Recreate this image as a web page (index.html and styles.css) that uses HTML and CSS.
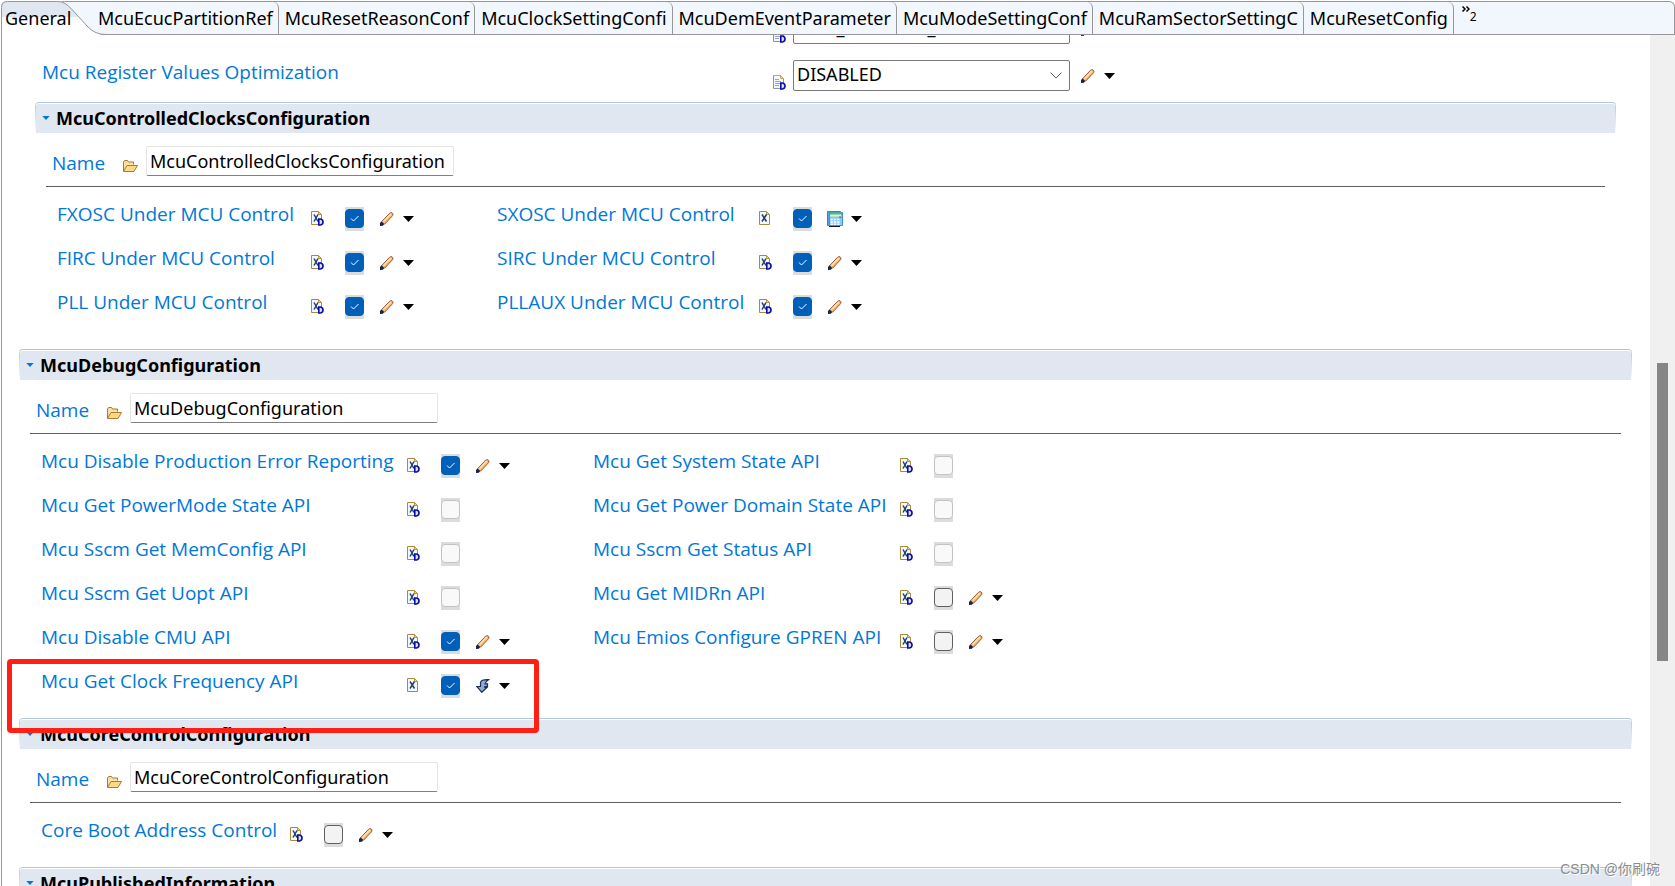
FILE: index.html
```html
<!DOCTYPE html>
<html lang="en">
<head>
<meta charset="utf-8">
<title>Mcu configuration</title>
<link rel="stylesheet" href="styles.css">
</head>
<body>
<svg class="sprites" aria-hidden="true">
  <symbol id="xml" viewBox="0 0 13 15">
    <path d="M.5 .5h7l3 3v10h-10z" fill="#f3f8fe" stroke="#a88a3c"/>
    <path d="M7.500.5v3h3z" fill="#ecd48c" stroke="#b8963f"/>
    <path d="M3 3.500l4.500 7M7.500 3.500l-4.500 7" stroke="#1f3f66" stroke-width="1.500" fill="none"/>
  </symbol>
  <symbol id="xmld" viewBox="0 0 13 15">
    <path d="M.5 .5h7l3 3v10h-10z" fill="#f3f8fe" stroke="#a88a3c"/>
    <path d="M7.500.5v3h3z" fill="#ecd48c" stroke="#b8963f"/>
    <path d="M3 3.500l4 7M7 3.500l-4 7" stroke="#1f3f66" stroke-width="1.500" fill="none"/>
    <path d="M7.800 8v6h1.700q2.500-.4 2.500-3t-2.500-3z" fill="#dbe3f5" stroke="#0b0ba8" stroke-width="1.600"/>
  </symbol>
  <symbol id="docd" viewBox="0 0 13 15">
    <path d="M.5 .5h7l3 3v10h-10z" fill="#f3f8fe" stroke="#8a93a8"/>
    <path d="M.5.5h7l3 3" fill="none" stroke="#c4ab68"/>
    <path d="M7.500.5v3h3z" fill="#ecd48c" stroke="#c4ab68"/>
    <path d="M2 4.500h4M2 6.500h6M2 8.500h5M2 10.500h4" stroke="#8da5cf"/>
    <path d="M7.800 8v6h1.700q2.500-.4 2.500-3t-2.500-3z" fill="#dbe3f5" stroke="#0b0ba8" stroke-width="1.600"/>
  </symbol>
  <symbol id="pencil" viewBox="0 0 14 14">
    <path d="M1.500 9.800L9.500 1.300q1.200-1 2.500-.5 1.300.8.8 2.600L4.800 12l-3 .8z" fill="#f5b877" stroke="#9a5a2c"/>
    <path d="M3.500 9.500l7.500-7.500" stroke="#ffe2b8" stroke-width="1.500"/>
    <path d="M0 14v-3l1.500-1.500L4 11.700 3 13.700z" fill="#14225c"/>
  </symbol>
  <symbol id="calc" viewBox="0 0 16 16">
    <path d="M2 14h11v2H2z" fill="#10233c"/>
    <path d="M.5.5h13v14H.5z" fill="#4fa3e6" stroke="#2f86d0"/>
    <path d="M2.500 1.500h13v13h-13z" fill="#8cc8f5" stroke="#3d93da"/>
    <path d="M3 1.500h12v2.500H3z" fill="#57bb6a"/>
    <path d="M3 3.500h11v2H3z" fill="#d8f2d4"/>
    <path d="M3.500 8.500h9M3.500 11h9M3.500 13.300h9" stroke="#fff" stroke-width="1.600" stroke-dasharray="2.400 .9"/>
    <path d="M12 5.500h2.500v1.500H12z" fill="#d0564c"/>
  </symbol>
  <symbol id="arrow" viewBox="0 0 14 14">
    <path d="M12.500.7Q5.500.3 4.500 3.500v4H.8l5 5.800L10.800 8.500H8.800V7.500h2.700V4.800H9Q9.500 2.500 12.500.7z" fill="#8eacd4" stroke="#1b3053" stroke-width="1.200"/>
  </symbol>
  <symbol id="folder" viewBox="0 0 15 12">
    <path d="M.5 11V2l1-1.500h3l1 1.500h5v2.500" fill="#f7e2a6" stroke="#a8782c"/>
    <path d="M.5 11.500L4 5.500h10.500L11 11.500z" fill="#fbd98a" stroke="#b07a28"/>
  </symbol>
  <symbol id="caret" viewBox="0 0 11 6"><path d="M0 0h11L5.500 6z"/></symbol>
  <symbol id="check" viewBox="0 0 19 19"><path d="M6 9.500l2.500 2.500 5-5" fill="none" stroke="#fff"/></symbol>
  <symbol id="chevron" viewBox="0 0 12 7"><path d="M.5.5L6 6 11.500.5" fill="none" stroke="#606060"/></symbol>
</svg>

<div class="editor">
  <nav class="tabs" role="tablist">
    <button class="tab tab-active" role="tab" aria-selected="true">
      <svg class="tab-shape" viewBox="0 0 106 34" aria-hidden="true">
        <path d="M1 34V6Q1 0 7 0H58Q65 0 72 8L88 26Q95 34 106 34z" fill="#fff"/>
        <path d="M1 16V6Q1 0 7 0H58Q65 0 72 8L79 16z" fill="#e0e7f1"/>
        <path d="M1.500 34V6.500Q1.500.5 7.500.5H58Q65 .5 72 8.500L88 26Q95 33.500 106 33.500" fill="none" stroke="#979797"/>
      </svg>
      <span>General</span>
    </button>
    <button class="tab" role="tab">McuEcucPartitionRef</button>
    <button class="tab" role="tab">McuResetReasonConf</button>
    <button class="tab" role="tab">McuClockSettingConfi</button>
    <button class="tab" role="tab">McuDemEventParameter</button>
    <button class="tab" role="tab">McuModeSettingConf</button>
    <button class="tab" role="tab">McuRamSectorSettingC</button>
    <button class="tab" role="tab">McuResetConfig</button>
    <button class="more" aria-label="2 more tabs">
      <svg width="8" height="6" viewBox="0 0 8 6" aria-hidden="true"><path d="M.5.500L3 3 .5 5.500M4.500.500L7 3 4.500 5.500" fill="none" stroke="#000" stroke-width="1.500"/></svg>
      <span>2</span>
    </button>
  </nav>

  <div class="pane">
    <main class="form">
      <div class="choice">
        <span></span>
        <svg class="doc"><use href="#docd"/></svg>
        <span class="combo"><select aria-label="Mcu Timeout Method"><option>OSIF_COUNTER_DUMMY</option></select><svg><use href="#chevron"/></svg></span>
        <button class="action" aria-label="Edit timeout method"><svg class="pencil"><use href="#pencil"/></svg><svg class="caret"><use href="#caret"/></svg></button>
      </div>
      <div class="choice">
        <label for="optimization">Mcu Register Values Optimization</label>
        <svg class="doc"><use href="#docd"/></svg>
        <span class="combo"><select id="optimization"><option>DISABLED</option></select><svg><use href="#chevron"/></svg></span>
        <button class="action" aria-label="Edit optimization"><svg class="pencil"><use href="#pencil"/></svg><svg class="caret"><use href="#caret"/></svg></button>
      </div>

      <section class="section section-nested">
        <h2><svg><use href="#caret"/></svg>McuControlledClocksConfiguration</h2>
        <div class="name"><label for="n1">Name</label><svg><use href="#folder"/></svg><input id="n1" type="text" value="McuControlledClocksConfiguration"></div>
        <div class="rows rows-clocks">
          <label for="c1">FXOSC Under MCU Control</label>
          <div class="controls"><svg class="doc"><use href="#xmld"/></svg><span class="box"><input id="c1" type="checkbox" checked><svg><use href="#check"/></svg></span><button class="action" aria-label="Edit FXOSC"><svg class="pencil"><use href="#pencil"/></svg><svg class="caret"><use href="#caret"/></svg></button></div>
          <label for="c2">SXOSC Under MCU Control</label>
          <div class="controls"><svg class="doc"><use href="#xml"/></svg><span class="box"><input id="c2" type="checkbox" checked><svg><use href="#check"/></svg></span><button class="action" aria-label="Calculate SXOSC"><svg class="calc"><use href="#calc"/></svg><svg class="caret"><use href="#caret"/></svg></button></div>
          <label for="c3">FIRC Under MCU Control</label>
          <div class="controls"><svg class="doc"><use href="#xmld"/></svg><span class="box"><input id="c3" type="checkbox" checked><svg><use href="#check"/></svg></span><button class="action" aria-label="Edit FIRC"><svg class="pencil"><use href="#pencil"/></svg><svg class="caret"><use href="#caret"/></svg></button></div>
          <label for="c4">SIRC Under MCU Control</label>
          <div class="controls"><svg class="doc"><use href="#xmld"/></svg><span class="box"><input id="c4" type="checkbox" checked><svg><use href="#check"/></svg></span><button class="action" aria-label="Edit SIRC"><svg class="pencil"><use href="#pencil"/></svg><svg class="caret"><use href="#caret"/></svg></button></div>
          <label for="c5">PLL Under MCU Control</label>
          <div class="controls"><svg class="doc"><use href="#xmld"/></svg><span class="box"><input id="c5" type="checkbox" checked><svg><use href="#check"/></svg></span><button class="action" aria-label="Edit PLL"><svg class="pencil"><use href="#pencil"/></svg><svg class="caret"><use href="#caret"/></svg></button></div>
          <label for="c6">PLLAUX Under MCU Control</label>
          <div class="controls"><svg class="doc"><use href="#xmld"/></svg><span class="box"><input id="c6" type="checkbox" checked><svg><use href="#check"/></svg></span><button class="action" aria-label="Edit PLLAUX"><svg class="pencil"><use href="#pencil"/></svg><svg class="caret"><use href="#caret"/></svg></button></div>
        </div>
      </section>

      <section class="section">
        <h2><svg><use href="#caret"/></svg>McuDebugConfiguration</h2>
        <div class="name"><label for="n2">Name</label><svg><use href="#folder"/></svg><input id="n2" type="text" value="McuDebugConfiguration"></div>
        <div class="rows rows-debug">
          <label for="d1">Mcu Disable Production Error Reporting</label>
          <div class="controls"><svg class="doc"><use href="#xmld"/></svg><span class="box"><input id="d1" type="checkbox" checked><svg><use href="#check"/></svg></span><button class="action" aria-label="Edit error reporting"><svg class="pencil"><use href="#pencil"/></svg><svg class="caret"><use href="#caret"/></svg></button></div>
          <label for="d2">Mcu Get System State API</label>
          <div class="controls"><svg class="doc"><use href="#xmld"/></svg><span class="box"><input id="d2" type="checkbox" disabled></span></div>
          <label for="d3">Mcu Get PowerMode State API</label>
          <div class="controls"><svg class="doc"><use href="#xmld"/></svg><span class="box"><input id="d3" type="checkbox" disabled></span></div>
          <label for="d4">Mcu Get Power Domain State API</label>
          <div class="controls"><svg class="doc"><use href="#xmld"/></svg><span class="box"><input id="d4" type="checkbox" disabled></span></div>
          <label for="d5">Mcu Sscm Get MemConfig API</label>
          <div class="controls"><svg class="doc"><use href="#xmld"/></svg><span class="box"><input id="d5" type="checkbox" disabled></span></div>
          <label for="d6">Mcu Sscm Get Status API</label>
          <div class="controls"><svg class="doc"><use href="#xmld"/></svg><span class="box"><input id="d6" type="checkbox" disabled></span></div>
          <label for="d7">Mcu Sscm Get Uopt API</label>
          <div class="controls"><svg class="doc"><use href="#xmld"/></svg><span class="box"><input id="d7" type="checkbox" disabled></span></div>
          <label for="d8">Mcu Get MIDRn API</label>
          <div class="controls"><svg class="doc"><use href="#xmld"/></svg><span class="box"><input id="d8" type="checkbox"></span><button class="action" aria-label="Edit MIDRn"><svg class="pencil"><use href="#pencil"/></svg><svg class="caret"><use href="#caret"/></svg></button></div>
          <label for="d9">Mcu Disable CMU API</label>
          <div class="controls"><svg class="doc"><use href="#xmld"/></svg><span class="box"><input id="d9" type="checkbox" checked><svg><use href="#check"/></svg></span><button class="action" aria-label="Edit CMU"><svg class="pencil"><use href="#pencil"/></svg><svg class="caret"><use href="#caret"/></svg></button></div>
          <label for="d10">Mcu Emios Configure GPREN API</label>
          <div class="controls"><svg class="doc"><use href="#xmld"/></svg><span class="box"><input id="d10" type="checkbox"></span><button class="action" aria-label="Edit GPREN"><svg class="pencil"><use href="#pencil"/></svg><svg class="caret"><use href="#caret"/></svg></button></div>
          <label for="d11">Mcu Get Clock Frequency API</label>
          <div class="controls"><svg class="doc"><use href="#xml"/></svg><span class="box"><input id="d11" type="checkbox" checked><svg><use href="#check"/></svg></span><button class="action" aria-label="Reset clock frequency"><svg class="pencil"><use href="#arrow"/></svg><svg class="caret"><use href="#caret"/></svg></button></div>
        </div>
        <div class="highlight"></div>
      </section>

      <section class="section">
        <h2><svg><use href="#caret"/></svg>McuCoreControlConfiguration</h2>
        <div class="name"><label for="n3">Name</label><svg><use href="#folder"/></svg><input id="n3" type="text" value="McuCoreControlConfiguration"></div>
        <div class="rows rows-core">
          <label for="e1">Core Boot Address Control</label>
          <div class="controls"><svg class="doc"><use href="#xmld"/></svg><span class="box"><input id="e1" type="checkbox"></span><button class="action" aria-label="Edit boot address"><svg class="pencil"><use href="#pencil"/></svg><svg class="caret"><use href="#caret"/></svg></button></div>
        </div>
      </section>

      <section class="section">
        <h2><svg><use href="#caret"/></svg>McuPublishedInformation</h2>
      </section>
    </main>
    <div class="scrollbar"><div class="thumb"></div></div>
  </div>
  <div class="watermark">CSDN @你刷碗</div>
</div>
</body>
</html>
```
FILE: styles.css
```css
* { box-sizing: border-box; }

body {
  margin: 0;
  font: 18px/24px "Noto Sans", "Open Sans", sans-serif;
  color: #000;
  background: #fff;
}

button, input, select { font: inherit; color: inherit; }
button { padding: 0; border: 0; background: none; }
svg { display: block; flex: none; }
.sprites { position: absolute; width: 0; height: 0; }

.editor {
  position: relative;
  display: flex;
  flex-direction: column;
  height: 100vh;
  overflow: hidden;
}

/* Tab strip */
.tabs {
  display: flex;
  flex: none;
  height: 34px;
  margin: 1px 0 0 1px;
  border: 1px solid #979797;
  border-width: 1px 1px 1px 0;
  border-radius: 6px 6px 0 0;
  background: #f2f7fe;
}
.tab {
  flex: none;
  padding: 0 5px 0 6px;
  border-right: 1px solid #979797;
  border-radius: 0 6px 0 0;
  white-space: nowrap;
}
.tab-active {
  position: relative;
  width: 91px;
  padding: 0 0 0 4px;
  border: 0;
  text-align: left;
}
.tab-shape {
  position: absolute;
  top: -1px;
  left: -1px;
  width: 106px;
  height: 34px;
}
.tab-active span { position: relative; }
.more {
  display: flex;
  align-items: flex-start;
  padding: 4px 8px;
  font-size: 12px;
}
.more span { line-height: 22px; }

/* Scrolled form */
.pane {
  display: flex;
  flex: 1;
  min-height: 0;
  border-left: 1px solid #979797;
  margin-left: 1px;
  overflow: hidden;
}
.form {
  flex: 1;
  min-width: 0;
  margin-top: -22px;
  padding: 0 18px 0 17px;
}
.scrollbar { flex: none; width: 25px; background: #f0f0f0; }
.thumb {
  width: 11px;
  height: 35%;
  margin: 328px 0 0 7px;
  background: #868686;
}

label {
  color: #0078d7;
  font-family: "Open Sans", "Noto Sans", sans-serif;
  font-size: 19px;
  white-space: nowrap;
}

.choice {
  display: grid;
  grid-template-columns: 731px 20px 277px auto;
  justify-content: start;
  align-items: center;
  height: 31px;
  margin: 0 0 16px 23px;
}
.choice + .choice { margin-bottom: 11px; }
.choice label { padding-bottom: 7px; }
.choice .doc { margin-top: 14px; }
.combo { display: grid; align-items: center; }
.combo > * { grid-area: 1 / 1; }
.combo select {
  width: 100%;
  height: 31px;
  padding: 0 3px 3px;
  border: 1px solid #7a7a7a;
  border-radius: 2px;
  background: #fff;
  appearance: none;
}
.combo svg { width: 12px; height: 7px; margin-right: 8px; justify-self: end; pointer-events: none; }
.choice .action { margin-left: 11px; }

.section { position: relative; padding-bottom: 20px; }
.section-nested { margin: 0 16px; padding-bottom: 30px; }
h2 {
  display: flex;
  align-items: center;
  gap: 6px;
  height: 31px;
  margin: 0;
  padding: 0 7px;
  border-top: 1px solid #b4c6de;
  border-radius: 4px 4px 0 0;
  background:
    linear-gradient(#b4c6de, #fff) left / 1px 100% no-repeat,
    linear-gradient(#b4c6de, #fff) right / 1px 100% no-repeat,
    #e0e7f1;
  box-shadow: inset 0 1px #fff;
  font-size: 18px;
  font-weight: 700;
}
h2 svg { width: 8px; height: 4px; fill: #0078d7; }

.name {
  display: flex;
  align-items: center;
  height: 54px;
  margin: 0 11px;
  padding: 3px 6px 0;
  border-bottom: 1px solid #606060;
}
.name label { width: 71px; padding-top: 3px; }
.name svg { width: 15px; height: 12px; margin: 10px 8px 0 0; }
.name input {
  width: 308px;
  height: 30px;
  padding: 0 3px;
  border: 1px solid #e5e5e5;
  border-bottom-color: #808080;
  border-radius: 2px;
  background: #fff;
}

.rows {
  display: grid;
  grid-auto-rows: 44px;
  justify-content: start;
  padding-left: 22px;
}
.rows label { padding-top: 15px; }
.rows-clocks { grid-template-columns: 254px 186px 262px auto; }
.rows-debug { grid-template-columns: 366px 186px 307px auto; }
.rows-core { grid-template-columns: 249px auto; }

.controls { display: flex; align-items: center; padding-top: 20px; }
.doc { width: 13px; height: 15px; }
.controls .doc { margin: 0 21px 2px 0; }
.box {
  display: grid;
  width: 19px;
  height: 24px;
  padding-top: 2px;
  background: #dcdcdc;
}
.box > * { grid-area: 1 / 1; width: 19px; height: 19px; }
.box svg { pointer-events: none; }
.box input {
  margin: 0;
  border: 1px solid #606060;
  border-radius: 4px;
  background: #f3f3f3;
  appearance: none;
}
.box input:checked { border-color: #005fb8; background: #005fb8; }
.box input:disabled { border-color: #c3c3c3; background: #f9f9f9; }

.action { display: flex; align-items: center; gap: 9px; }
.controls .action { margin-left: 16px; }
.pencil { width: 14px; height: 14px; }
.calc { width: 16px; height: 16px; margin: 0 -1px; }
.caret { width: 11px; height: 6px; }

/* Red annotation over the last debug option */
.highlight {
  position: absolute;
  left: -12px;
  bottom: -15px;
  z-index: 1;
  width: 532px;
  height: 74px;
  border: 5px solid #ff2015;
  border-radius: 4px;
}

.watermark {
  position: absolute;
  right: 15px;
  bottom: 5px;
  color: #8c8c8c;
  font: 14px/24px "Liberation Sans", "Noto Sans CJK SC", sans-serif;
  text-shadow: 1px 1px #fff;
}
```
